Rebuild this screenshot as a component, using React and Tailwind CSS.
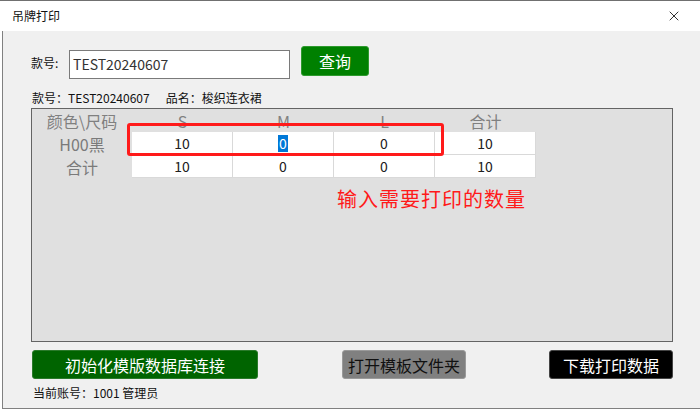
import { X } from "lucide-react";

const FONT = { fontFamily: '"Noto Sans CJK SC", "Noto Sans", sans-serif' };

const sizes = ["S", "M", "L", "合计"];
const rows = [
  { name: "H00黑", values: ["10", "0", "0", "10"], editable: true },
  { name: "合计", values: ["10", "0", "0", "10"] },
];

function GridRow({ row }) {
  return (
    <div className="flex h-[23px]">
      <div className="flex w-[100px] items-center justify-center text-[16px] text-[#7a7a7a]">{row.name}</div>
      {row.values.map((value, i) => (
        <div key={i} className="flex w-[101px] items-center justify-center border-r border-b border-[#d9d9d9] bg-white text-[14px] text-[#202020]">
          {row.editable && i === 1 ? <span className="bg-[#0078d7] px-[1px] leading-[17px] text-white">{value}</span> : value}
        </div>
      ))}
    </div>
  );
}

export default function App() {
  return (
    <div className="flex h-[410px] w-[700px] flex-col overflow-hidden border-t border-[#707070] bg-white" style={FONT}>
      <div className="flex h-[30px] shrink-0 items-center justify-between pl-[12px] pr-[18px] text-[12px] text-[#111]">
        <span>吊牌打印</span>
        <X size={16} strokeWidth={1.3} />
      </div>

      <div className="ml-[2px] flex h-[378px] flex-col border-b border-l border-[#808080] bg-[#f0f0f0] pl-[28px]">
        <div className="mt-[15px] flex items-start">
          <span className="mt-[8px] w-[38px] text-[12px] text-[#111]">款号:</span>
          <div className="mt-[4px] flex h-[29px] w-[221px] items-center border border-[#7a7a7a] bg-white px-[3px] text-[14px] text-[#333]">TEST20240607</div>
          <button className="ml-[11px] flex h-[30px] w-[68px] items-center justify-center rounded-[3px] border border-[#2e9a2e] bg-[#008000] text-[16px] text-white">查询</button>
        </div>

        <div className="mt-[10px] flex gap-[16px] pl-[1px] text-[12px] text-[#111]">
          <span>款号：TEST20240607</span>
          <span>品名：梭织连衣裙</span>
        </div>

        <div className="relative mt-[1px] h-[234px] w-[642px] border border-[#646464] bg-[#e0e0e0]">
          <div className="flex h-[23px] items-center text-[16px] text-[#808080]">
            <div className="w-[100px] text-center">颜色\尺码</div>
            {sizes.map((s) => (
              <div key={s} className="w-[101px] text-center">{s}</div>
            ))}
          </div>
          {rows.map((row) => (
            <GridRow key={row.name} row={row} />
          ))}
          <div className="absolute left-[95px] top-[14px] h-[33px] w-[317px] rounded-[3px] border-[3px] border-[#ff1a1a]" />
          <div className="ml-[305px] mt-[6px] text-[20px] tracking-[1px] text-[#ff1a1a]">输入需要打印的数量</div>
        </div>

        <div className="mt-[8px] flex w-[642px] items-center justify-between pl-[1px]">
          <button className="flex h-[29px] w-[226px] items-center justify-center rounded-[3px] border border-[#2a7a2a] bg-[#006400] text-[16px] text-white">初始化模版数据库连接</button>
          <button className="ml-[84px] flex h-[29px] w-[124px] items-center justify-center rounded-[3px] border border-[#9a9a9a] bg-[#808080] text-[16px] text-[#111]">打开模板文件夹</button>
          <button className="ml-auto flex h-[29px] w-[124px] items-center justify-center rounded-[3px] border border-[#444] bg-black text-[16px] text-white">下载打印数据</button>
        </div>

        <div className="mt-[5px] pl-[2px] text-[12px] text-[#111]">当前账号：1001 管理员</div>
      </div>
    </div>
  );
}
